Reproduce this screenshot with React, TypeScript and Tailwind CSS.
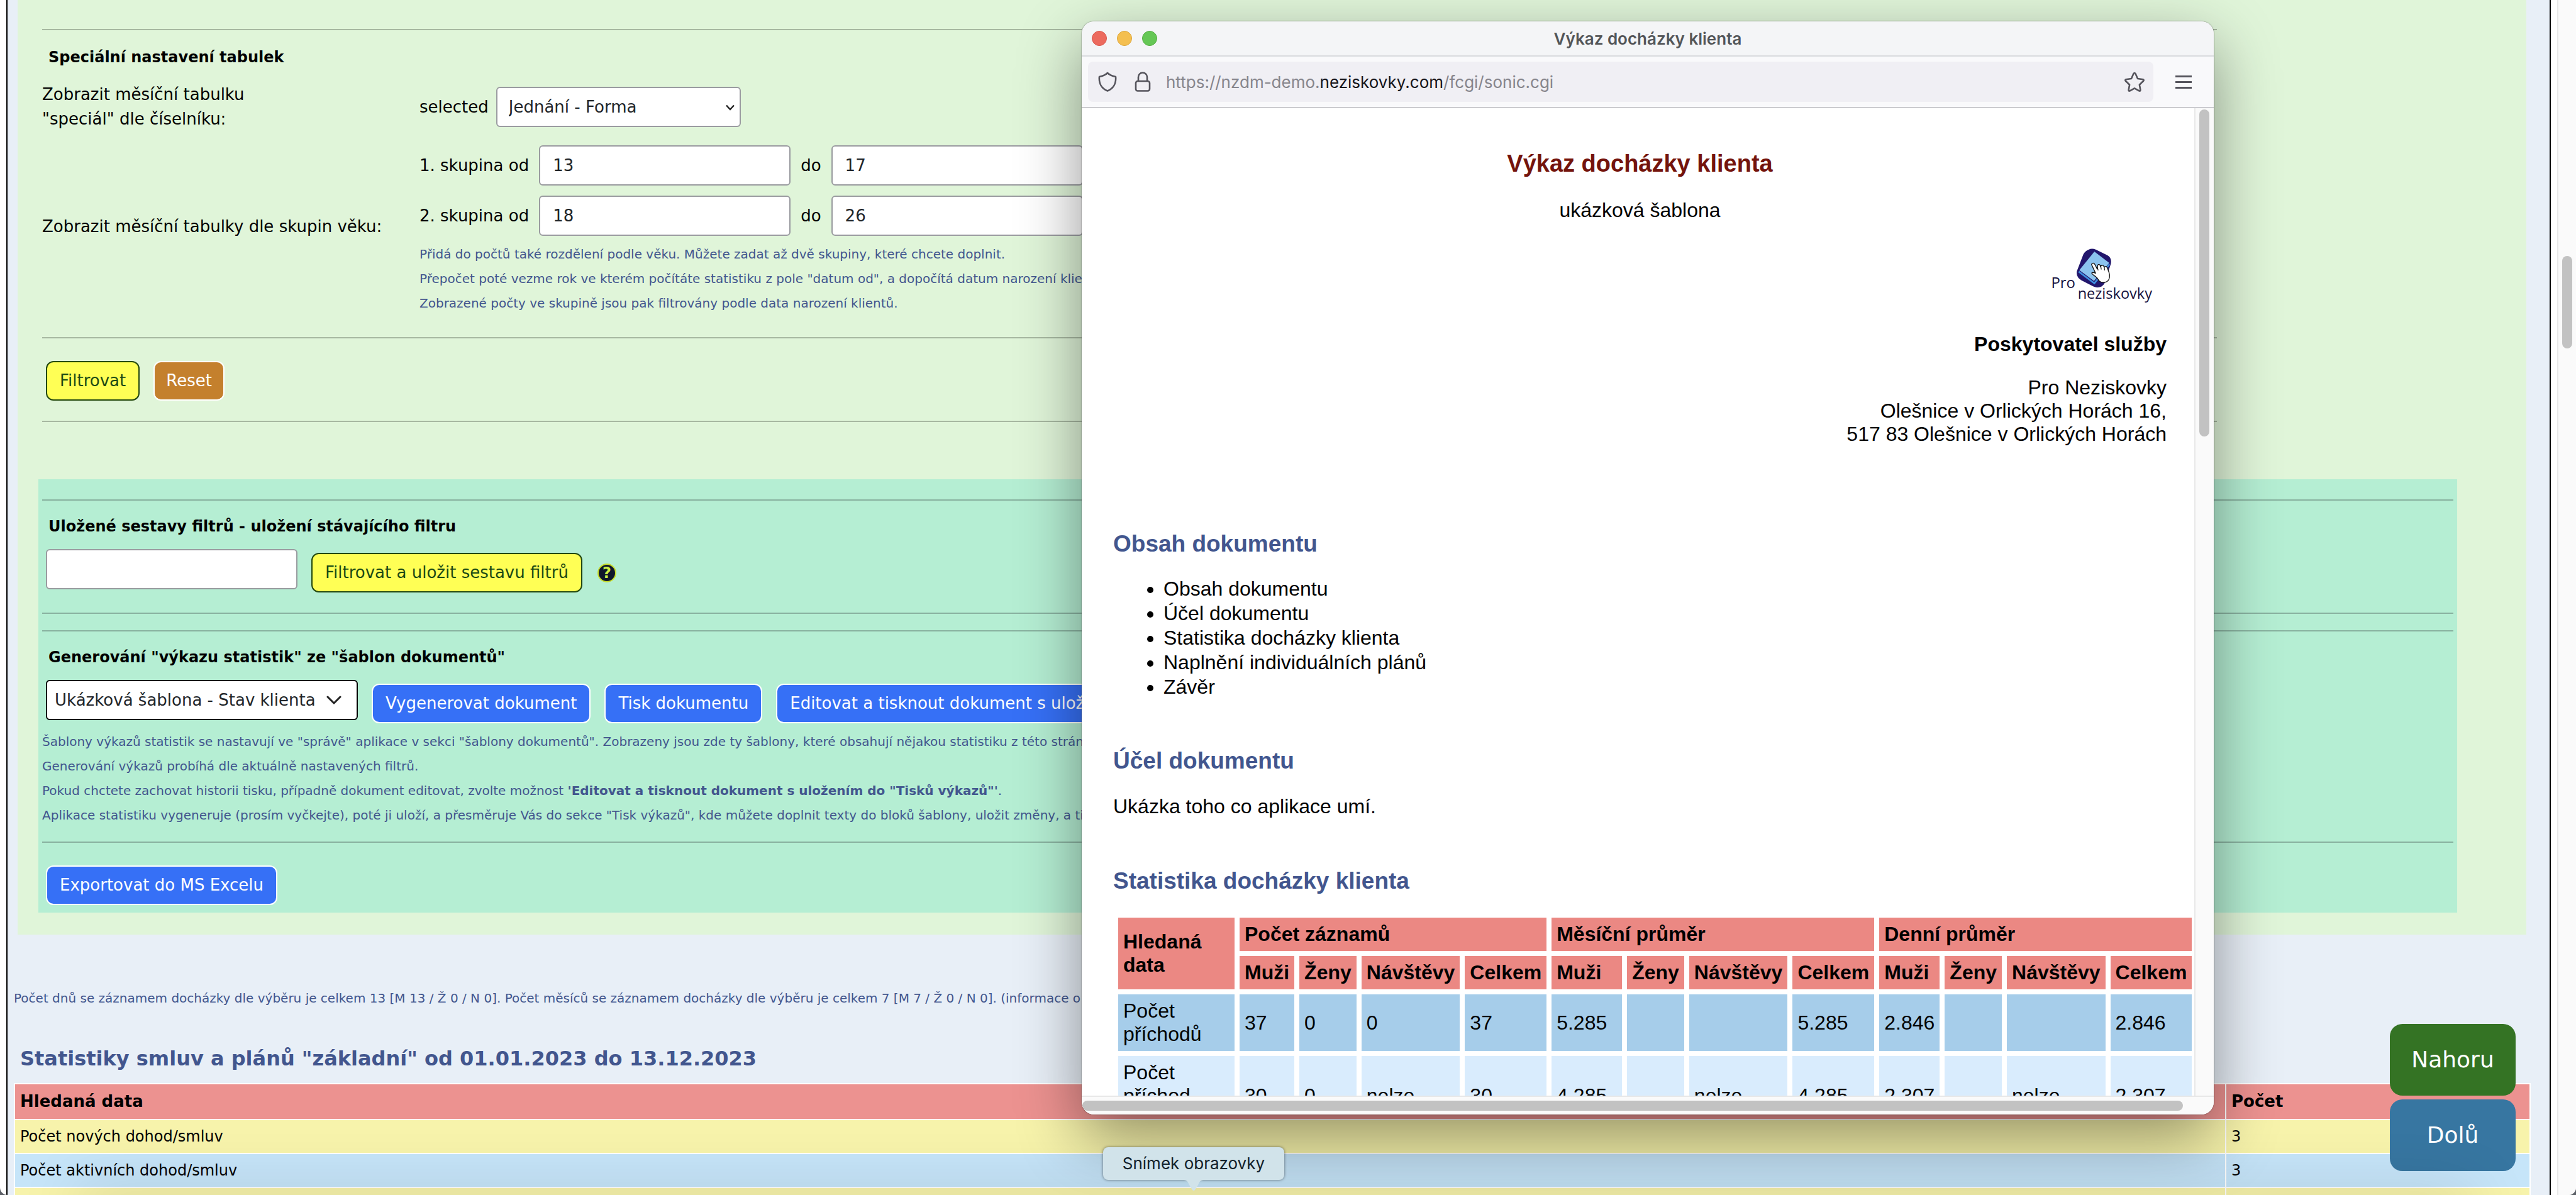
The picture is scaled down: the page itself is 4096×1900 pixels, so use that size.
import React from "react";

const yellowButton =
  "h-[63px] shrink-0 whitespace-nowrap rounded-xl border-2 border-[#24490f] bg-[#ffff55] px-5 text-[#1c4a14]";
const blueButton =
  "h-[63px] shrink-0 whitespace-nowrap rounded-xl border-2 border-white bg-[#3670f6] px-5 text-white";
const textInput =
  "h-16 w-[400px] shrink-0 rounded-md border-2 border-[#9a9ba0] bg-white px-5 text-[#212529]";

function SectionTitle({ children }: { children: React.ReactNode }) {
  return <h3 className="px-2.5 text-2xl/[39px] font-bold">{children}</h3>;
}

function AgeRange({ n, from, to }: { n: number; from: string; to: string }) {
  return (
    <div className="flex items-center gap-4">
      <label htmlFor={`from-${n}`}>{n}. skupina od</label>
      <input id={`from-${n}`} className={textInput} defaultValue={from} />
      <label htmlFor={`to-${n}`}>do</label>
      <input id={`to-${n}`} className={textInput} defaultValue={to} />
    </div>
  );
}

function FilterPanel() {
  return (
    <section className="ml-4 mr-[37px] bg-[#e0f5d9] pt-[46px] pb-[35px] pl-[33px] pr-[110px]">
      <div className="max-w-[3464px] pl-1.5">
        <hr className="border-t-2 border-[#a7b8a1]" />
        <div className="mt-6">
          <SectionTitle>Speciální nastavení tabulek</SectionTitle>
        </div>
        <div className="mt-5 grid grid-cols-[600px_1fr] items-center">
          <label htmlFor="special">
            Zobrazit měsíční tabulku
            <br />
            "speciál" dle číselníku:
          </label>
          <div className="flex items-center gap-3">
            <span>selected</span>
            <span className="relative">
              <select
                id="special"
                className="h-16 w-[389px] appearance-none rounded-md border-2 border-[#9a9ba0] bg-white px-[18px] text-[#212529]"
              >
                <option>Jednání - Forma</option>
              </select>
              <svg
                className="pointer-events-none absolute top-7 right-2.5 h-2.5 w-3.5"
                viewBox="0 0 14 10"
                fill="none"
                stroke="#222"
                strokeWidth="2.4"
              >
                <path d="M1 1.5 7 8l6-6.5" />
              </svg>
            </span>
          </div>
        </div>
        <div className="mt-[22px] grid grid-cols-[600px_1fr] items-center">
          <span className="pb-3">Zobrazit měsíční tabulky dle skupin věku:</span>
          <div className="flex flex-col gap-4">
            <AgeRange n={1} from="13" to="17" />
            <AgeRange n={2} from="18" to="26" />
            <p className="-mt-1.5 text-xl/[39px] whitespace-nowrap text-[#42568e]">
              Přidá do počtů také rozdělení podle věku. Můžete zadat až dvě skupiny, které chcete doplnit.
              <br />
              Přepočet poté vezme rok ve kterém počítáte statistiku z pole "datum od", a dopočítá datum narození klientů.
              <br />
              Zobrazené počty ve skupině jsou pak filtrovány podle data narození klientů.
            </p>
          </div>
        </div>
        <hr className="mt-[34px] border-t-2 border-[#a7b8a1]" />
        <div className="mt-9 flex gap-[22px] px-1.5">
          <button className={yellowButton}>Filtrovat</button>
          <button className="h-[63px] rounded-xl border-2 border-white bg-[#c4802d] px-[18px] text-white">
            Reset
          </button>
        </div>
        <hr className="mt-8 border-t-2 border-[#a7b8a1]" />
      </div>

      <div className="mt-[91px] bg-[#b5eed3] px-1.5 pt-8 pb-3">
        <hr className="border-t-2 border-[#88b19f]" />
        <div className="mt-[22px]">
          <SectionTitle>
            <label htmlFor="set-name">Uložené sestavy filtrů - uložení stávajícího filtru</label>
          </SectionTitle>
        </div>
        <div className="mt-4 flex gap-[22px] px-1.5">
          <input id="set-name" className={textInput} />
          <div className="flex items-center gap-6 pt-1.5">
            <button className={yellowButton}>Filtrovat a uložit sestavu filtrů</button>
            <button
              aria-label="Nápověda"
              className="flex size-[30px] items-center justify-center rounded-full border-2 border-[#c6dc2c] bg-[#10172b] text-2xl/6 font-bold text-[#cdf044]"
            >
              ?
            </button>
          </div>
        </div>
        <hr className="mt-8 border-t-2 border-[#88b19f]" />
        <hr className="mt-[26px] border-t-2 border-[#88b19f]" />
        <div className="mt-[22px]">
          <SectionTitle>
            <label htmlFor="template">Generování "výkazu statistik" ze "šablon dokumentů"</label>
          </SectionTitle>
        </div>
        <div className="mt-4 flex gap-[22px] px-1.5">
          <span className="relative">
            <select
              id="template"
              className="h-16 w-[496px] appearance-none rounded-md border-2 border-black bg-white px-3 text-[#212529]"
            >
              <option>Ukázková šablona - Stav klienta</option>
            </select>
            <svg
              className="pointer-events-none absolute top-6 right-[26px] h-4 w-6"
              viewBox="0 0 24 16"
              fill="none"
              stroke="#222"
              strokeWidth="3"
              strokeLinecap="round"
              strokeLinejoin="round"
            >
              <path d="m2 3 10 10L22 3" />
            </svg>
          </span>
          <div className="flex gap-[22px] pt-1.5">
            <button className={blueButton}>Vygenerovat dokument</button>
            <button className={blueButton}>Tisk dokumentu</button>
            <button className={blueButton}>Editovat a tisknout dokument s uložením</button>
          </div>
        </div>
        <p className="mt-2.5 text-xl/[39px] whitespace-nowrap text-[#42568e]">
          Šablony výkazů statistik se nastavují ve "správě" aplikace v sekci "šablony dokumentů". Zobrazeny jsou zde ty
          šablony, které obsahují nějakou statistiku z této stránky.
          <br />
          Generování výkazů probíhá dle aktuálně nastavených filtrů.
          <br />
          Pokud chctete zachovat historii tisku, případně dokument editovat, zvolte možnost{" "}
          <b>'Editovat a tisknout dokument s uložením do "Tisků výkazů"'</b>.
          <br />
          Aplikace statistiku vygeneruje (prosím vyčkejte), poté ji uloží, a přesměruje Vás do sekce "Tisk výkazů", kde
          můžete doplnit texty do bloků šablony, uložit změny, a tisknout.
        </p>
        <hr className="mt-[22px] border-t-2 border-[#88b19f]" />
        <div className="mt-9 px-1.5">
          <button className={blueButton}>Exportovat do MS Excelu</button>
        </div>
      </div>
    </section>
  );
}

const contractRows = [
  { label: "Počet nových dohod/smluv", value: "3", tone: "bg-[#f7f3ab]" },
  { label: "Počet aktivních dohod/smluv", value: "3", tone: "bg-[#c6e5f9]" },
  { label: "", value: "", tone: "bg-[#f7f3ab]" },
];

function ContractTable() {
  return (
    <table className="mt-[19px] w-full border-collapse text-left text-2xl">
      <thead>
        <tr className="h-[57px] bg-[#ec9290] text-[26px]">
          <th className="border-2 border-white px-2">Hledaná data</th>
          <th className="w-[12.1%] border-2 border-white px-2">Počet</th>
        </tr>
      </thead>
      <tbody>
        {contractRows.map((r, i) => (
          <tr key={i} className={`h-[54px] ${r.tone}`}>
            <td className="border-2 border-white px-2">{r.label}</td>
            <td className="border-2 border-white px-2">{r.value}</td>
          </tr>
        ))}
      </tbody>
    </table>
  );
}

function Logo() {
  return (
    <svg className="h-[88px] w-[163px]" viewBox="185 95 490 265" role="img" aria-label="Pro neziskovky">
      <path
        d="M362 107q16-9 36 0l55 27q21 12 16 40l-31 95q-13 22-40 18-9-1-17-6l-53-27q-27-16-22-44l31-80q8-17 25-23Z"
        fill="#22166c"
      />
      <path d="M390 116 461 170 388 257 318 205Z" fill="#8cc3ee" />
      <path d="M315 212 390 268 462 177" fill="none" stroke="#3f8fe0" strokeWidth="8" />
      <path
        d="M377 176c4-8 13-5 16 3l10 20c0-16 3-22 10-21 5 1 6 6 7 12 1-10 12-14 17 1 5-7 14-4 16 6 9 20 13 41 6 53-10 18-38 17-48 4-6-9-8-14-15-18-8-6-17-10-19-17 4-5 11-3 19 1l-18-38c-2-3-2-5-1-6Z"
        fill="#fff"
        stroke="#111"
        strokeWidth="4"
        strokeLinejoin="round"
      />
      <path d="m403 186 5 20M420 182l3 20M437 188l2 18" stroke="#111" strokeWidth="3.5" fill="none" />
      <text x="183" y="291" fontFamily="'Open Sans', sans-serif" fontSize="72" fill="#15123f">
        Pro
      </text>
      <text x="310" y="341" fontFamily="'Open Sans', sans-serif" fontSize="71" fill="#15123f">
        neziskovky
      </text>
    </svg>
  );
}

const groups = ["Počet záznamů", "Měsíční průměr", "Denní průměr"];
const visitRows = [
  {
    label: ["Počet", "příchodů"],
    values: ["37", "0", "0", "37", "5.285", "", "", "5.285", "2.846", "", "", "2.846"],
    tone: "h-[90px] bg-[#a6cdea]",
  },
  {
    label: ["Počet", "příchod"],
    values: ["30", "0", "nelze", "30", "4.285", "", "nelze", "4.285", "2.307", "", "nelze", "2.307"],
    tone: "h-[127px] bg-[#d9ecfd]",
  },
];

function VisitTable() {
  return (
    <table className="mt-7 w-max border-separate border-spacing-2 text-left">
      <thead>
        <tr>
          <th rowSpan={2} className="w-[185px] bg-[#eb8883] p-2">
            Hledaná
            <br />
            data
          </th>
          {groups.map((g) => (
            <th key={g} colSpan={4} className="bg-[#eb8883] p-2">
              {g}
            </th>
          ))}
        </tr>
        <tr>
          {groups.map((g, i) => (
            <React.Fragment key={g}>
              <th className={`bg-[#eb8883] p-2 ${i === 1 ? "w-28" : ""}`}>Muži</th>
              <th className="bg-[#eb8883] p-2">Ženy</th>
              <th className="bg-[#eb8883] p-2">Návštěvy</th>
              <th className="bg-[#eb8883] p-2">Celkem</th>
            </React.Fragment>
          ))}
        </tr>
      </thead>
      <tbody>
        {visitRows.map((r) => (
          <tr key={r.label[1]}>
            <td className={`p-2 align-top ${r.tone}`}>
              {r.label[0]}
              <br />
              {r.label[1]}
            </td>
            {r.values.map((v, i) => (
              <td key={i} className={`p-2 ${r.tone}`}>
                {v}
              </td>
            ))}
          </tr>
        ))}
      </tbody>
    </table>
  );
}

function DocTitle({ children }: { children: React.ReactNode }) {
  return <h2 className="text-[37px]/[44px] font-bold text-[#42568e]">{children}</h2>;
}

function Popup() {
  return (
    <div className="absolute top-[34px] left-[1720px] flex h-[1738px] w-[1800px] flex-col overflow-hidden rounded-[20px] bg-white shadow-[0_0_2px_rgba(0,0,0,0.6),0_36px_100px_rgba(0,0,0,0.42)]">
      <header className="flex h-14 shrink-0 items-center gap-4 border-b-2 border-[#d9dbde] bg-[#f4f5f7] px-4 font-['Inter',sans-serif]">
        <button aria-label="Zavřít" className="size-6 rounded-full border border-[#d9564b] bg-[#ec6a5e]" />
        <button aria-label="Minimalizovat" className="size-6 rounded-full border border-[#dba53c] bg-[#f4bf50]" />
        <button aria-label="Zvětšit" className="size-6 rounded-full border border-[#55ad43] bg-[#65c755]" />
        <h1 className="flex-1 pr-[120px] text-center text-[26px] font-semibold text-[#535558]">
          Výkaz docházky klienta
        </h1>
      </header>
      <div className="flex h-[82px] shrink-0 items-center gap-[35px] border-b-2 border-[#cbcbcf] bg-[#f9f9fb] pr-[35px] pl-2.5">
        <div className="flex h-16 flex-1 items-center rounded-lg bg-[#f0eff4] pr-3.5 pl-4 font-['Inter',sans-serif]">
          <svg className="h-8 w-[30px]" viewBox="0 0 30 32" fill="none" stroke="#55545c" strokeWidth="2.6" strokeLinejoin="round">
            <path d="M15 2c3 3 8 5 13 6 1 11-4 19-13 22.500C6 27 1 19 2 8c5-1 10-3 13-6Z" />
          </svg>
          <svg className="ml-7 h-8 w-[26px]" viewBox="0 0 26 32" fill="none" stroke="#55545c" strokeWidth="2.6">
            <rect x="2" y="15" width="22" height="15.500" rx="3" />
            <path d="M6 15V8.500a7 7 0 0 1 14 0V15" />
          </svg>
          <a href="#address" className="ml-6 flex-1 text-[26px] text-[#86858c]">
            https://nzdm-demo.<span className="text-[#15141a]">neziskovky.com</span>/fcgi/sonic.cgi
          </a>
          <button aria-label="Přidat záložku">
            <svg className="size-8" viewBox="0 0 32 32" fill="none" stroke="#55545c" strokeWidth="2.6" strokeLinejoin="round">
              <path d="M14.500 3q1.500-2 3 0l3.500 8 8.500 1.200q2 .8.600 2.600l-6.200 6 1.500 8.400q-.2 2-2.200 1.200L16 26.300l-7.200 4.100q-2 .8-2.200-1.200l1.500-8.400-6.200-6q-1.400-1.800.6-2.600L11 11Z" />
            </svg>
          </button>
        </div>
        <button aria-label="Nabídka" className="flex w-[26px] flex-col gap-1.5">
          <span className="h-[3px] w-full bg-[#55545c]" />
          <span className="h-[3px] w-full bg-[#55545c]" />
          <span className="h-[3px] w-full bg-[#55545c]" />
        </button>
      </div>
      <div className="flex min-h-0 flex-1">
        <div className="min-w-0 flex-1 overflow-hidden pt-[66px] pr-11 pl-[50px] font-['Liberation_Sans',sans-serif] text-[32px]/[37px]">
          <h1 className="text-center text-[38px]/[44px] font-bold text-[#74140c]">Výkaz docházky klienta</h1>
          <p className="mt-[34px] text-center">ukázková šablona</p>
          <div className="mt-10 flex justify-end pr-5">
            <Logo />
          </div>
          <p className="mt-12 text-right font-bold">Poskytovatel služby</p>
          <p className="mt-8 text-right">
            Pro Neziskovky
            <br />
            Olešnice v Orlických Horách 16,
            <br />
            517 83 Olešnice v Orlických Horách
          </p>
          <div className="mt-[134px]">
            <DocTitle>Obsah dokumentu</DocTitle>
          </div>
          <ul className="mt-[30px] list-disc pl-20 leading-[39px]">
            <li>Obsah dokumentu</li>
            <li>Účel dokumentu</li>
            <li>Statistika docházky klienta</li>
            <li>Naplnění individuálních plánů</li>
            <li>Závěr</li>
          </ul>
          <div className="mt-[76px]">
            <DocTitle>Účel dokumentu</DocTitle>
          </div>
          <p className="mt-8">Ukázka toho co aplikace umí.</p>
          <div className="mt-[78px]">
            <DocTitle>Statistika docházky klienta</DocTitle>
          </div>
          <div className="-mr-11">
            <VisitTable />
          </div>
        </div>
        <div className="w-[31px] shrink-0 border-l-2 border-[#e8e8e8] bg-[#fafafa] px-1.5 pt-0.5">
          <div className="h-[520px] w-4 rounded-full bg-[#c2c2c2]" />
        </div>
      </div>
      <div className="h-[30px] shrink-0 border-t-2 border-[#e8e8e8] bg-[#fafafa] pt-1.5 pr-[49px] pl-px">
        <div className="h-4 rounded-full bg-[#c2c2c2]" />
      </div>
    </div>
  );
}

export default function App() {
  return (
    <div className="h-screen bg-[#5b5f66] text-black">
      <div className="relative flex h-full overflow-hidden rounded-b-xl bg-white font-['DejaVu_Sans',sans-serif] text-[26px]/[39px]">
        <main className="mr-2.5 ml-2.5 min-w-0 flex-1 border-x-2 border-black bg-[#e8eff7]">
          <FilterPanel />
          <div className="mr-[30px] ml-2.5">
            <p className="mt-[82px] text-xl/[39px] whitespace-nowrap text-[#42568e]">
              Počet dnů se záznamem docházky dle výběru je celkem 13 [M 13 / Ž 0 / N 0]. Počet měsíců se záznamem
              docházky dle výběru je celkem 7 [M 7 / Ž 0 / N 0]. (informace o docházce)
            </p>
            <h2 className="mt-14 pl-2.5 text-[32px]/[40px] font-bold text-[#42568e]">
              Statistiky smluv a plánů "základní" od 01.01.2023 do 13.12.2023
            </h2>
            <ContractTable />
          </div>
        </main>
        <div className="w-[30px] shrink-0 border-l-2 border-[#e8e8e8] bg-[#fafafa] px-1.5 pt-[407px]">
          <div className="h-[147px] w-4 rounded-full bg-[#c2c2c2]" />
        </div>

        <nav className="absolute right-24 bottom-[38px] flex w-[200px] flex-col gap-1.5 text-center text-4xl/[114px] text-white">
          <a href="#top" className="rounded-[20px] bg-[#347324]">
            Nahoru
          </a>
          <a href="#bottom" className="rounded-[20px] bg-[#3776a1]">
            Dolů
          </a>
        </nav>

        <div className="pointer-events-none absolute right-40 -bottom-10 left-[120px] h-10 shadow-[0_0_100px_rgba(0,0,0,0.2)]" />

        <Popup />

        <div
          role="tooltip"
          className="absolute top-[1824px] left-[1754px] h-[52px] w-[288px] rounded-lg bg-[#d1e3ea] text-center font-['Inter',sans-serif] text-[26px]/[52px] text-[#12212b] shadow-[0_0_4px_rgba(0,0,0,0.5)]"
        >
          Snímek obrazovky
          <svg className="absolute top-full left-[128px] h-[18px] w-8" viewBox="0 0 32 18">
            <path d="M0 0c6 0 7 4 9 8l5 8q2 2 4 0l5-8c2-4 3-8 9-8Z" fill="#d1e3ea" />
          </svg>
        </div>
      </div>
    </div>
  );
}
